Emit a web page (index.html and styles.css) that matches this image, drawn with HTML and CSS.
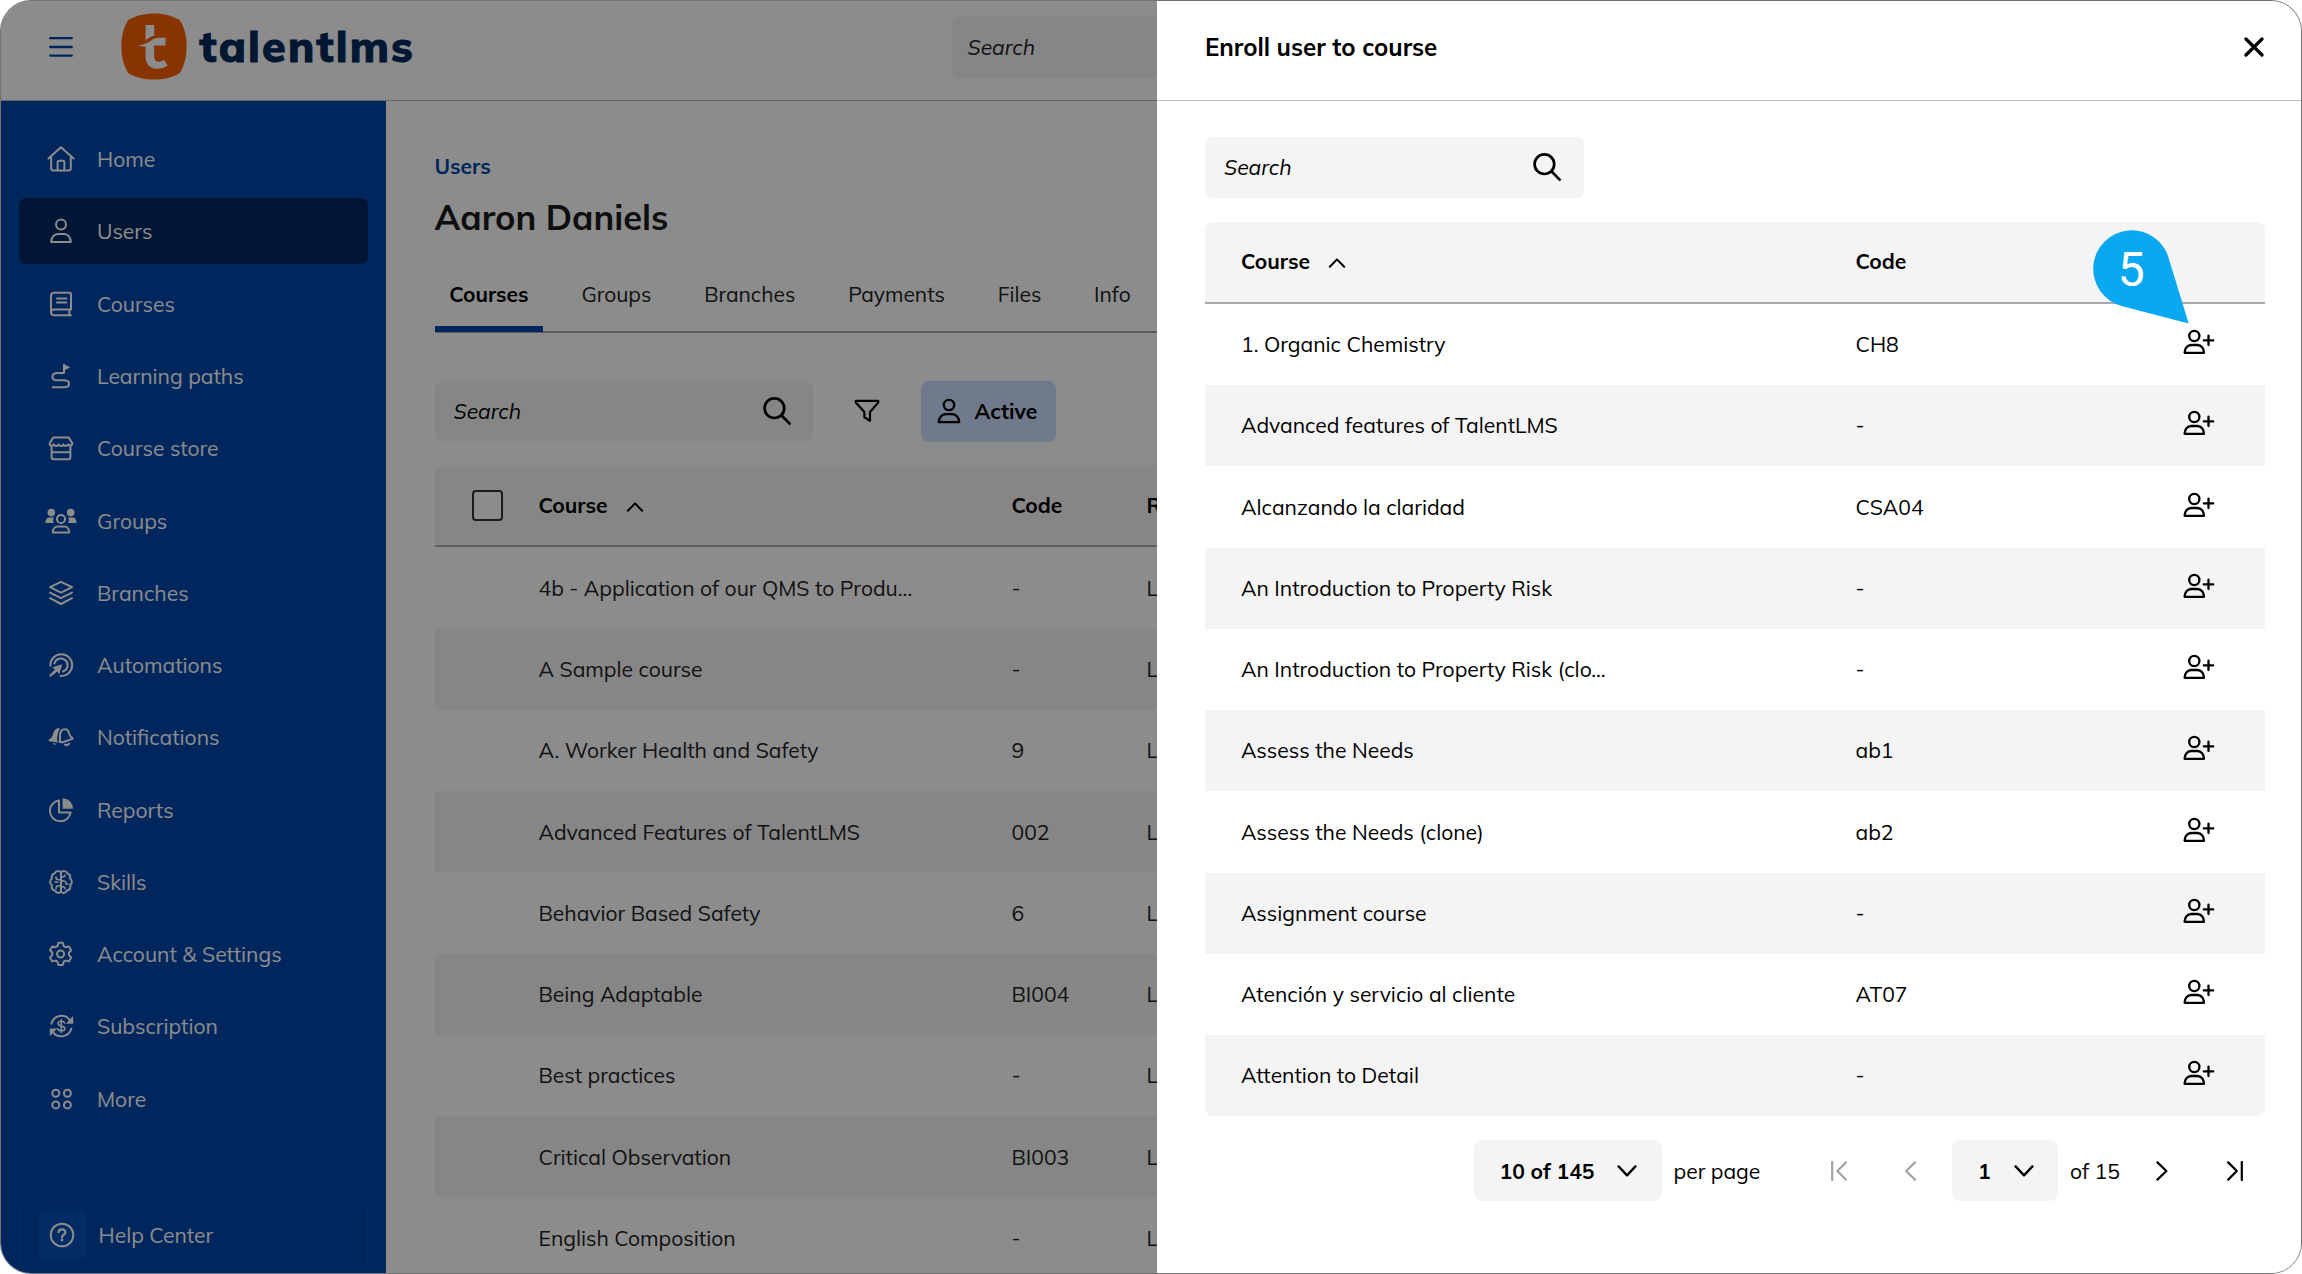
FILE: index.html
```html
<!DOCTYPE html>
<html lang="en">
<head>
<meta charset="utf-8">
<title>TalentLMS - Enroll user to course</title>
<link rel="stylesheet" href="styles.css">
</head>
<body>
<svg class="sprite" aria-hidden="true">
  <symbol id="i-search" viewBox="0 0 28 28"><circle cx="11.4" cy="11.2" r="9.8"/><path d="M18.4 18.2 26.6 26.6"/></symbol>
  <symbol id="i-user" viewBox="0 0 24 26"><circle cx="12" cy="7" r="5.2"/><path d="M1.8 24.2h20.4c0-4.6-3-8-7-8H8.800c-4 0-7 3.400-7 8z"/></symbol>
  <symbol id="i-enroll" viewBox="0 0 32 26"><circle cx="11.300" cy="7" r="5.100"/><path d="M1.600 23.800h19.400c0-4.600-2.800-7.800-6.600-7.800H8.200c-3.800 0-6.600 3.200-6.600 7.800z"/><path d="M20.800 11.400h9.400M25.500 6.700v9.400"/></symbol>
  <symbol id="i-up" viewBox="0 0 18 12"><path d="M1.800 9.800 9 2.400l7.200 7.400"/></symbol>
  <symbol id="i-down" viewBox="0 0 20 14"><path d="M1.600 2.400 10 11.400l8.400-9"/></symbol>
</svg>

<div class="app">
  <header class="topbar">
    <svg class="burger" viewBox="0 0 26 22"><path d="M2.200 2.200h21.600M2.200 11h21.600M2.200 19.600h21.600"/></svg>
    <svg class="logo" viewBox="0 0 66 67"><path class="logo-bg" d="M33 .4C43 .4 51 2.600 58.500 6.800 63.400 14 65.600 23 65.600 33.500S63.400 53 58.500 60.200C51 64.600 43 66.600 33 66.600S15 64.600 7.500 60.200C2.600 53 .4 44 .4 33.500S2.600 14 7.500 6.800C15 2.600 23 .4 33 .4z"/><path class="logo-mark" d="M24.600 12h8.600v10.400c-3 1-6 2.600-8.600 4.800zM17.200 32.400c5.400-.6 9-2 12.400-4.400 2.800-2.200 5.400-3.200 8.800-3.200h6.200v7.800H33.200v9.800c0 4.400 1.400 6.400 4.600 6.400 2 0 3.900-.8 5.400-2l3.300 5.800c-2.800 2.200-6.200 3.200-9.800 3.200-7.600 0-12.100-4.600-12.100-12.400V33.600c-2.200-.2-4.600-.2-7.400-1.200z"/></svg>
    <span class="wordmark">talentlms</span>
    <div class="top-search">Search</div>
  </header>

  <div class="body">
    <nav class="sidebar">
      <a class="nav"><svg viewBox="0 0 30 30"><path d="M2.400 14.600 15 3.300l12.600 11.300M5.200 12.600v11.600c0 1.400.8 2.200 2.200 2.200h15.200c1.400 0 2.200-.8 2.200-2.200V12.600M11.600 26.200v-8c0-.9.6-1.500 1.500-1.500h3.800c.9 0 1.500.6 1.500 1.500v8"/></svg>Home</a>
      <a class="nav active"><svg viewBox="0 0 30 30"><circle cx="15" cy="8.600" r="5"/><path d="M5.200 26h19.600c0-4.600-2.800-8-6.800-8h-6c-4 0-6.800 3.400-6.800 8z"/></svg>Users</a>
      <a class="nav"><svg viewBox="0 0 30 30"><path d="M25 20.600V5.200c0-.9-.5-1.400-1.400-1.400H8C6.200 3.800 5 5 5 6.800v16.400c0 1.800 1.200 3 3 3h17M25 20.600H8c-1.800 0-3 1.200-3 2.800M23.400 20.800v5.200M11 9.400h9.400M11 13.600h9.400"/></svg>Courses</a>
      <a class="nav"><svg viewBox="0 0 30 30"><path d="M18 12V3.800M18 12h-6.600c-3 0-5 1.600-5 3.700s2 3.600 5 3.600h6.800c3 0 4.900 1.500 4.900 3.500s-1.900 3.500-4.900 3.500H6.600"/><path class="fill" d="M17.600 3.200 24.400 6.200 18 9.800z"/></svg>Learning paths</a>
      <a class="nav"><svg viewBox="0 0 30 30"><path d="M7.200 4.600h15.600l3.400 5.400c.6 2.600-2.600 3.600-4 1.400-1.400 2.200-3.800 2.200-4.800 0-1.200 2.200-3.800 2.200-4.900 0-1.200 2.200-3.700 2.200-4.800 0-1.600 2.200-4.600 1.200-3.900-1.400zM5.600 13.600v10.600c0 1.300.7 2 2 2h14.800c1.300 0 2-.7 2-2V13.600M5.600 19.200h18.800"/></svg>Course store</a>
      <a class="nav"><svg class="wide" viewBox="0 0 32 30"><circle class="fill" cx="6.300" cy="6.600" r="3.800"/><circle class="fill" cx="25.700" cy="6.600" r="3.800"/><path class="fill" d="M.4 17c0-3.600 1.600-5.600 3.800-5.600h4.600c-.8 2-.8 3.800 0 5.600zM31.600 17c0-3.600-1.600-5.600-3.800-5.600h-4.600c.8 2 .8 3.800 0 5.600z"/><circle cx="16" cy="13" r="4.100"/><path d="M7.800 26.400h16.400c0-3.600-2-6-5-6h-6.400c-3 0-5 2.400-5 6z"/></svg>Groups</a>
      <a class="nav"><svg viewBox="0 0 30 30"><path d="M15 3.800 26 9.200 15 14.600 4 9.200zM4 14.600l11 5.600 11-5.600M4 20.200l11 5.800 11-5.800"/></svg>Branches</a>
      <a class="nav"><svg viewBox="0 0 30 30"><path d="M4.400 15.800A10.900 10.900 0 1 1 14.600 26M8.400 13.600a6.700 6.700 0 1 1 8.600 7.900M4.200 25.800l5.400-5.400"/><path class="fill" d="M16.200 14.200 6.200 17.600l3 2-4 4.600 1.200 1.200 5-3.800 1.800 3z"/></svg>Automations</a>
      <a class="nav"><svg viewBox="0 0 30 30"><path class="fill" d="M14 6.400C10 5.400 8 8 7 12c-.6 2.600-2 4.400-4.200 5.600l-.2 1.600 9.600 1.400c-1-1.600-1.400-3-.8-6 .6-3.600 1-6 2.600-8.200zM6.400 21.200c.8 1.600 3.200 2 4.400.6z"/><path d="M13.600 20c1-2 .2-4 .4-6.800.2-3.400 1.800-6 4.600-6 2.600-.2 3.800 1.400 4.400 4 .8 2.800 1.600 4 3.600 5l-.1.700-9.900 3.400zM19 22.600c1.600 1 3.400.6 4-1"/></svg>Notifications</a>
      <a class="nav"><svg viewBox="0 0 30 30"><path d="M13 5.600A10.400 10.400 0 1 0 24.600 17.400H13z"/><path class="fill" d="M16.600 3.200A10.600 10.600 0 0 1 27 13.800H16.600z"/></svg>Reports</a>
      <a class="nav"><svg viewBox="0 0 30 30"><path d="M15 5.200v19.800M15 5.600c-1.200-2-5.400-2.200-6.400.8-2.400.4-3.400 2.800-2.600 4.800-2.400 1.800-2.400 5.600-.2 7-.8 3 .8 5 3.200 5.200 1.400 3.200 5 3.200 6 1M15 5.600c1.200-2 5.400-2.200 6.400.8 2.400.4 3.400 2.800 2.600 4.800 2.400 1.800 2.400 5.600.2 7 .8 3-.8 5-3.200 5.200-1.400 3.200-5 3.200-6 1"/><path class="thin" d="M15 12.800h-2.600c-1.600 0-2.400-1-2.400-2.800M9 15h3M15 19.400c-3-1.600-5 0-5 2.200M15 10.200c2 0 4-.4 4-2.200M15 14c3.400-.4 5.200.4 5 3h2M19 21.600c0-1.400-2-2.200-4-2"/></svg>Skills</a>
      <a class="nav"><svg viewBox="0 0 30 30"><path d="M12.400 3.800h4.400l.9 3.300 2 1.100 3.200-.8 2.300 3.900-2.300 2.400v2.400l2.300 2.400-2.300 3.900-3.200-.8-2 1.100-.9 3.300h-4.400l-.9-3.300-2-1.100-3.200.8L4 18.500l2.300-2.400v-2.400L4 11.300l2.300-3.900 3.200.8 2-1.100z"/><circle cx="14.600" cy="15" r="3.500"/></svg>Account &amp; Settings</a>
      <a class="nav"><svg viewBox="0 0 30 30"><path d="M5.400 12.600C8 4.200 18.600 1.800 24 9.400M25.400 17.800C22.400 26.200 12 28 6.600 20.800"/><path class="fill" d="M27.200 5v7.800h-7.400zM3.800 25.200v-7.600h7.400z"/><path class="thin" d="M18.600 12c-.6-1.400-2-1.800-3.400-1.800-1.800 0-3.200.8-3.200 2.400 0 3.400 6.800 1.400 6.800 4.800 0 1.600-1.600 2.400-3.400 2.400s-3.200-.6-3.600-2M15.300 8.600v12.800"/></svg>Subscription</a>
      <a class="nav"><svg viewBox="0 0 30 30"><circle cx="9.800" cy="9.300" r="3.500"/><circle cx="21.400" cy="9.300" r="3.500"/><circle cx="9.800" cy="20.900" r="3.500"/><circle cx="21.400" cy="20.900" r="3.500"/></svg>More</a>
      <a class="help"><span class="help-tile"><svg viewBox="0 0 30 30"><circle cx="15" cy="15" r="11.300"/><path class="q" d="M11.600 12.200c.2-3.800 7-3.600 6.800.2 0 2.200-3.400 2.200-3.400 4.800"/><circle class="fill" cx="15" cy="20" r="1.400"/></svg></span>Help Center</a>
    </nav>

    <main class="content">
      <div class="crumb">Users</div>
      <h1>Aaron Daniels</h1>
      <div class="tabs"><span class="tab on">Courses</span><span class="tab">Groups</span><span class="tab">Branches</span><span class="tab">Payments</span><span class="tab">Files</span><span class="tab">Info</span></div>
      <div class="tools">
        <div class="search">Search<svg><use href="#i-search"/></svg></div>
        <svg class="funnel" viewBox="0 0 26 24"><path d="M1.800 1.800h22.400v1.800L16 13v8.800l-5.600-3.600V13L1.800 3.600z"/></svg>
        <div class="chip"><svg><use href="#i-user"/></svg>Active</div>
      </div>
      <div class="table main-table">
        <div class="tr th"><span class="check"></span><span>Course<svg class="caret"><use href="#i-up"/></svg></span><span>Code</span><span>Role</span></div>
        <div class="tr"><i></i><span>4b - Application of our QMS to Produ...</span><span>-</span><span>Learner</span></div>
        <div class="tr"><i></i><span>A Sample course</span><span>-</span><span>Learner</span></div>
        <div class="tr"><i></i><span>A. Worker Health and Safety</span><span>9</span><span>Learner</span></div>
        <div class="tr"><i></i><span>Advanced Features of TalentLMS</span><span>002</span><span>Learner</span></div>
        <div class="tr"><i></i><span>Behavior Based Safety</span><span>6</span><span>Learner</span></div>
        <div class="tr"><i></i><span>Being Adaptable</span><span>BI004</span><span>Learner</span></div>
        <div class="tr"><i></i><span>Best practices</span><span>-</span><span>Learner</span></div>
        <div class="tr"><i></i><span>Critical Observation</span><span>BI003</span><span>Learner</span></div>
        <div class="tr"><i></i><span>English Composition</span><span>-</span><span>Learner</span></div>
      </div>
    </main>
  </div>

  <div class="backdrop"></div>

  <aside class="drawer">
    <div class="drawer-head"><h2>Enroll user to course</h2><svg class="close" viewBox="0 0 20 20"><path d="M2 2l16 16M18 2 2 18"/></svg></div>
    <div class="drawer-body">
      <div class="search">Search<svg><use href="#i-search"/></svg></div>
      <div class="table enroll-table">
        <div class="tr th"><span>Course<svg class="caret"><use href="#i-up"/></svg></span><span>Code</span></div>
        <div class="tr"><span>1. Organic Chemistry</span><span>CH8</span><svg class="add"><use href="#i-enroll"/></svg></div>
        <div class="tr"><span>Advanced features of TalentLMS</span><span>-</span><svg class="add"><use href="#i-enroll"/></svg></div>
        <div class="tr"><span>Alcanzando la claridad</span><span>CSA04</span><svg class="add"><use href="#i-enroll"/></svg></div>
        <div class="tr"><span>An Introduction to Property Risk</span><span>-</span><svg class="add"><use href="#i-enroll"/></svg></div>
        <div class="tr"><span>An Introduction to Property Risk (clo...</span><span>-</span><svg class="add"><use href="#i-enroll"/></svg></div>
        <div class="tr"><span>Assess the Needs</span><span>ab1</span><svg class="add"><use href="#i-enroll"/></svg></div>
        <div class="tr"><span>Assess the Needs (clone)</span><span>ab2</span><svg class="add"><use href="#i-enroll"/></svg></div>
        <div class="tr"><span>Assignment course</span><span>-</span><svg class="add"><use href="#i-enroll"/></svg></div>
        <div class="tr"><span>Atención y servicio al cliente</span><span>AT07</span><svg class="add"><use href="#i-enroll"/></svg></div>
        <div class="tr"><span>Attention to Detail</span><span>-</span><svg class="add"><use href="#i-enroll"/></svg></div>
      </div>
      <div class="pager">
        <div class="select size">10 of 145<svg><use href="#i-down"/></svg></div>
        <span class="per">per page</span>
        <svg class="step first off" viewBox="0 0 18 20"><path d="M2.200 1v18M15.800 1.400 7.400 10l8.400 8.600"/></svg>
        <svg class="step prev off" viewBox="0 0 18 20"><path d="M14 1.400 5.200 10l8.800 8.600"/></svg>
        <div class="select page">1<svg><use href="#i-down"/></svg></div>
        <span class="of">of 15</span>
        <svg class="step next" viewBox="0 0 18 20"><path d="M4.400 1.400 13.400 10l-9 8.600"/></svg>
        <svg class="step last" viewBox="0 0 18 20"><path d="M2.200 1.400 10.800 10l-8.600 8.600M15.800 1v18"/></svg>
      </div>
    </div>
  </aside>

  <svg class="marker" viewBox="0 0 98 95"><path d="M77.200 31 96.700 94.500 30.400 77.200A38.500 38.500 0 1 1 77.200 31z"/><text x="39.300" y="57" text-anchor="middle">5</text></svg>
</div>
</body>
</html>
```
FILE: styles.css
```css
* { box-sizing: border-box; }
html, body { margin: 0; height: 100%; }
body {
  background: #fff;
  color: #000;
  font: 400 21.1px/28px Mulish, "Nunito Sans", "Open Sans", sans-serif;
  overflow: hidden;
}
svg { fill: none; stroke: currentColor; stroke-width: 2; stroke-linecap: round; stroke-linejoin: round; flex: none; }
.fill { fill: currentColor; stroke: none; }
.thin { stroke-width: 1.6; }
.sprite { position: absolute; width: 0; height: 0; }

.app {
  position: relative;
  width: 2302px;
  height: 1274px;
  border: 1px solid #747474;
  border-radius: 31px;
  overflow: hidden;
  display: flex;
  flex-direction: column;
}

/* top bar */
.topbar {
  height: 100px;
  flex: none;
  display: flex;
  align-items: flex-start;
  border-bottom: 1px solid #b9bec4;
  color: #0046ab;
}
.burger { width: 26px; height: 22px; margin: 35px 0 0 47px; stroke-width: 2.3; }
.logo { width: 66px; height: 67px; margin: 12px 0 0 47px; stroke: none; }
.logo-bg { fill: #f86000; }
.logo-mark { fill: #fff; }
.wordmark { width: 216px; margin: 15px 0 0 12.500px; font-size: 43px; line-height: 60px; font-weight: 800; letter-spacing: 2.2px; color: #002a5c; -webkit-text-stroke: 1px #002a5c; white-space: nowrap; }
.top-search { width: 480px; height: 62px; margin: 15px 0 0 536px; padding: 17px 16px; border-radius: 6px; background: #f5f5f5; color: #222; font-style: italic; }

.body { flex: 1; min-height: 0; display: flex; }

/* sidebar */
.sidebar {
  width: 385px;
  flex: none;
  padding: 25px 18px 4px;
  background: #0046ab;
  color: #fff;
  display: flex;
  flex-direction: column;
  gap: 6.100px;
}
.nav { display: flex; align-items: center; height: 66.200px; flex: none; padding-left: 27px; border-radius: 7px; }
.nav svg { width: 30px; height: 30px; margin-right: 21px; }
.nav svg.wide { width: 32px; margin: 0 20px 0 -1px; }
.nav.active { background: #002860; }
.help { display: flex; align-items: center; height: 68px; margin-top: auto; padding-left: 18px; border: 1px solid #064fb6; border-radius: 7px; }
.help-tile { width: 48.500px; height: 48.500px; margin-right: 12px; border-radius: 7px; background: #0650b8; display: flex; align-items: center; justify-content: center; }
.help-tile svg { width: 30px; height: 30px; }
.q { stroke-width: 2.2; }

/* user page */
.content { flex: 1; min-width: 0; padding: 51px 0 0 48.500px; background: #fff; }
.crumb { color: #0046ab; font-weight: 700; font-size: 21px; }
h1 { margin: 13px 0 0; font-size: 34.500px; line-height: 48px; font-weight: 700; color: #1a1a1a; }
.tabs { display: flex; gap: 23.200px; height: 66px; margin-top: 26px; border-bottom: 2px solid #a5a9ad; font-size: 21px; }
.tab { padding: 13px 14.800px 0; height: 65px; color: #222; }
.tab.on { font-weight: 700; color: #000; border-bottom: 6px solid #0046ab; }
.tools { display: flex; align-items: center; height: 61px; margin-top: 47.500px; }
.search { width: 378.500px; height: 60.500px; padding: 0 22.500px 0 19px; border-radius: 7px; background: #f4f4f4; font-style: italic; display: flex; align-items: center; justify-content: space-between; }
.search svg { width: 28px; height: 28px; stroke-width: 2.700; }
.funnel { width: 26px; height: 24px; margin: 0 41px 0 40.500px; stroke-width: 2.200; }
.chip { width: 135px; height: 61px; padding-left: 16px; border-radius: 8px; background: #cadeff; display: flex; align-items: center; gap: 14px; font-weight: 700; }
.chip svg { width: 24px; height: 26px; stroke-width: 2.300; }

/* tables */
.table { border-radius: 8px; overflow: hidden; }
.tr { height: 81.250px; display: grid; align-items: center; white-space: nowrap; }
.tr:nth-child(odd) { background: #f4f4f4; }
.tr.th { height: 82.300px; border-bottom: 2px solid #a7abb0; font-weight: 700; }
.caret { width: 18px; height: 12px; margin-left: 18px; stroke-width: 2; }
.main-table { margin-top: 23.500px; }
.main-table .tr { grid-template-columns: 104px 473px 135px 200px; color: #222; }
.main-table .tr.th { color: #000; }
.check { width: 31px; height: 31px; margin-left: 37px; border: 2px solid #333; border-radius: 4px; background: #fff; }
.enroll-table { margin-top: 24px; }
.enroll-table .tr { grid-template-columns: 614.500px 327.500px 32px; padding-left: 36px; padding-bottom: .5px; }
.add { width: 32px; height: 26px; margin-top: -4px; stroke-width: 2.300; }

/* drawer over the page */
.backdrop { position: absolute; inset: 0; background: rgba(0, 0, 0, .45); }
.drawer { position: absolute; top: 0; right: 0; bottom: 0; width: 1144px; background: #fff; }
.drawer-head { height: 100px; padding: 0 37px 8px 48px; border-bottom: 1px solid #b9bec4; display: flex; align-items: center; justify-content: space-between; }
h2 { margin: 0; font-size: 24.100px; line-height: 32px; font-weight: 700; }
.close { width: 20px; height: 20px; stroke-width: 3.200; }
.drawer-body { padding: 36px 36px 0 48px; }

.pager { display: flex; align-items: center; margin-top: 24px; height: 61px; padding-left: 268.500px; }
.select { height: 61px; border-radius: 8px; background: #f4f4f4; display: flex; align-items: center; justify-content: space-between; font-weight: 700; padding: 0 24.500px 0 26px; }
.select svg { width: 20px; height: 14px; stroke-width: 2.300; }
.size { width: 188px; }
.page { width: 106px; margin-left: 33px; }
.per { width: 88px; margin-left: 12px; white-space: nowrap; }
.of { width: 52px; margin-left: 12px; white-space: nowrap; }
.step { width: 18px; height: 20px; stroke-width: 2.200; }
.off { color: #9ea3a8; }
.first { margin-left: 68px; }
.prev { margin-left: 53.500px; }
.next { margin-left: 30.500px; }
.last { margin-left: 55px; }

/* callout pointing at the first enroll action */
.marker { position: absolute; left: 2091px; top: 228px; width: 98px; height: 95px; }
.marker path { fill: #0aa8f0; stroke: none; }
.marker text { fill: #fff; stroke: none; font: 400 48px Roboto, sans-serif; }
```
